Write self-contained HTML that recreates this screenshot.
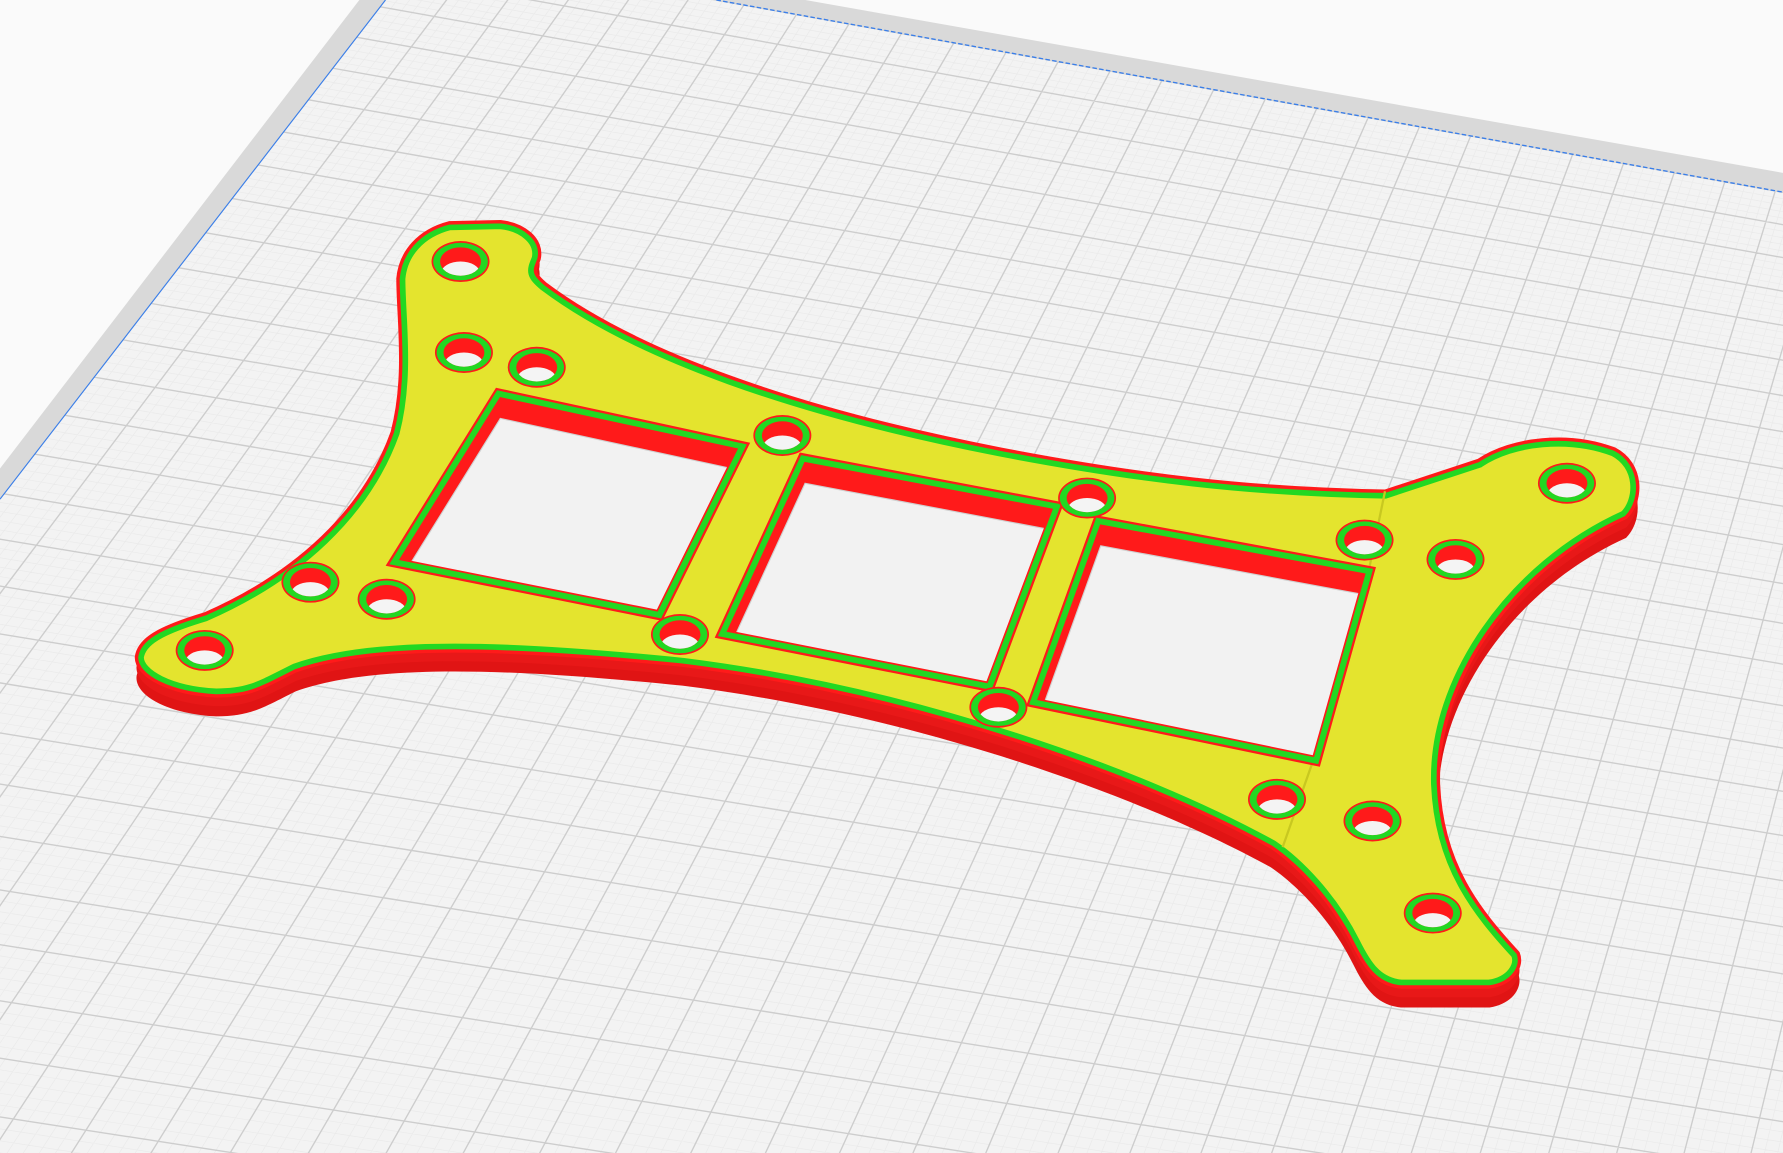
<!DOCTYPE html>
<html><head><meta charset="utf-8"><style>html,body{margin:0;padding:0;overflow:hidden;background:#fafafa;width:1783px;height:1153px}svg{display:block}</style></head>
<body>
<svg id="s" xmlns="http://www.w3.org/2000/svg" width="1783" height="1153" viewBox="0 0 1568 1014" preserveAspectRatio="none">
<defs>
<clipPath id="bed"><polygon points="339,0 630,0 1568,169 1568,1014 0,1014 0,439"/></clipPath>
<path id="part" d="M350,245 C352,222 368,203 395,196 L440,195 C460,197 478,210 474,228 C470,238 468,240 480,250 C560,310 700,360 880,395 C1000,418 1100,430 1218,432 L1300,405 C1330,385 1380,380 1420,395 C1445,408 1445,440 1430,455 C1330,500 1262,600 1265,690 C1268,760 1300,800 1335,838 C1340,850 1330,865 1310,868 L1232,868 C1210,866 1200,850 1190,830 C1170,790 1140,760 1118,745 C1000,680 800,610 600,585 C450,570 330,565 260,590 C230,605 220,612 190,612 C150,610 120,595 120,578 C122,562 140,552 180,540 C260,505 320,450 345,380 C358,330 350,280 350,245 Z"/>
<clipPath id="partclip"><use href="#part"/></clipPath>
</defs>
<rect width="1568" height="1014" fill="#fafafa"/>
<polygon points="316,0 0,412 0,1014 1568,1014 1568,152 680,-5" fill="#d9d9d9"/>
<polygon points="339,0 630,0 1568,169 1568,1014 0,1014 0,439" fill="#f3f3f3"/>
<g id="grid" clip-path="url(#bed)"></g>
<polyline points="0,439 339,0" stroke="#3a7ee8" stroke-width="1" fill="none"/>
<polyline points="630,0 1568,169" stroke="#3a7ee8" stroke-width="1.2" fill="none" stroke-dasharray="4,2"/>

<use href="#part" transform="translate(0,18)" fill="#e01414"/>
<use href="#part" transform="translate(0,9)" fill="#e81818"/>
<use href="#part" fill="#e4e42e"/>
<use href="#part" fill="none" stroke="#22d822" stroke-width="13" clip-path="url(#partclip)"/>
<use href="#part" fill="none" stroke="#ff1a1a" stroke-width="3"/>
<path d="M1218,432 L1200,520 L1165,640 L1128,745" stroke="#c8c820" stroke-width="2" fill="none"/>
<g id="wins"></g>
<g id="holes"></g>
</svg>
<script>
(function(){
var NS="http://www.w3.org/2000/svg";
function el(t,a,p){var e=document.createElementNS(NS,t);for(var k in a)e.setAttribute(k,a[k]);p.appendChild(e);return e;}
var P=[[374,-46],[2000,247],[1780,1700],[-700,1345]];
var x0=P[0][0],y0=P[0][1],x1=P[1][0],y1=P[1][1],x2=P[2][0],y2=P[2][1],x3=P[3][0],y3=P[3][1];
var dx1=x1-x2,dx2=x3-x2,dx3=x0-x1+x2-x3,dy1=y1-y2,dy2=y3-y2,dy3=y0-y1+y2-y3;
var den=dx1*dy2-dx2*dy1;var g=(dx3*dy2-dx2*dy3)/den,h=(dx1*dy3-dx3*dy1)/den;
var a=x1-x0+g*x1,b=x3-x0+h*x3,c=x0,d=y1-y0+g*y1,e=y3-y0+h*y3,f=y0;
function H(u,v){var w=g*u+h*v+1;return [(a*u+b*v+c)/w,(d*u+e*v+f)/w];}
var grid=document.getElementById('grid');
var N=36,M=5;
var minor="",major="";
for(var i=0;i<=N*M;i++){var t=i/(N*M);
 var p=H(t,0),q=H(t,1),r=H(0,t),s=H(1,t);
 var seg="M"+p[0].toFixed(1)+","+p[1].toFixed(1)+"L"+q[0].toFixed(1)+","+q[1].toFixed(1)+"M"+r[0].toFixed(1)+","+r[1].toFixed(1)+"L"+s[0].toFixed(1)+","+s[1].toFixed(1);
 if(i%M==0)major+=seg;else minor+=seg;}
el('path',{d:minor,stroke:"#eaeaea","stroke-width":"0.6",fill:"none"},grid);
el('path',{d:major,stroke:"#cdcdcd","stroke-width":"1.2",fill:"none"},grid);
var W=[[[440,350],[648,395],[578,537],[352,492]],[[708,407],[925,448],[868,600],[640,555]],[[968,462],[1200,505],[1155,665],[913,615]]];
var wins=document.getElementById('wins');
W.forEach(function(q,k){
 var pts=q.map(function(p){return p.join(",");}).join(" ");
 var sh=q.map(function(p){return p[0]+","+(p[1]+18);}).join(" ");
 var cp=el('clipPath',{id:"wc"+k},wins);el('polygon',{points:pts},cp);
 el('polygon',{points:pts,fill:"none",stroke:"#ff1a1a","stroke-width":"16","stroke-linejoin":"miter"},wins);
 el('polygon',{points:pts,fill:"none",stroke:"#22d822","stroke-width":"12","stroke-linejoin":"miter"},wins);
 el('polygon',{points:pts,fill:"#ff1a1a"},wins);
 var gg=el('g',{"clip-path":"url(#wc"+k+")"},wins);
 el('polygon',{points:sh,fill:"#f2f2f2"},gg);
 el('polygon',{points:sh,fill:"none",stroke:"#d0d0d0","stroke-width":"1"},gg);
 el('polygon',{points:pts,fill:"none",stroke:"#ff1a1a","stroke-width":"1.5"},wins);
});
var HO=[[405,230],[408,310],[472,323],[688,383],[956,438],[1200,475],[1378,425],[1280,492],[273,512],[340,527],[180,572],[598,558],[878,622],[1123,703],[1207,722],[1260,803]];
var holes=document.getElementById('holes');
HO.forEach(function(p,k){
 el('ellipse',{cx:p[0],cy:p[1],rx:25.5,ry:18,fill:"#ff1a1a"},holes);
 el('ellipse',{cx:p[0],cy:p[1],rx:24,ry:16.5,fill:"#22d822"},holes);
 el('ellipse',{cx:p[0],cy:p[1],rx:18,ry:12.5,fill:"#ff1a1a"},holes);
 var cp=el('clipPath',{id:"hc"+k},holes);el('ellipse',{cx:p[0],cy:p[1],rx:18,ry:12.5},cp);
 el('ellipse',{cx:p[0],cy:p[1]+10,rx:17,ry:10,fill:"#f4f4f4","clip-path":"url(#hc"+k+")"},holes);
});
})();
</script>
</body></html>
